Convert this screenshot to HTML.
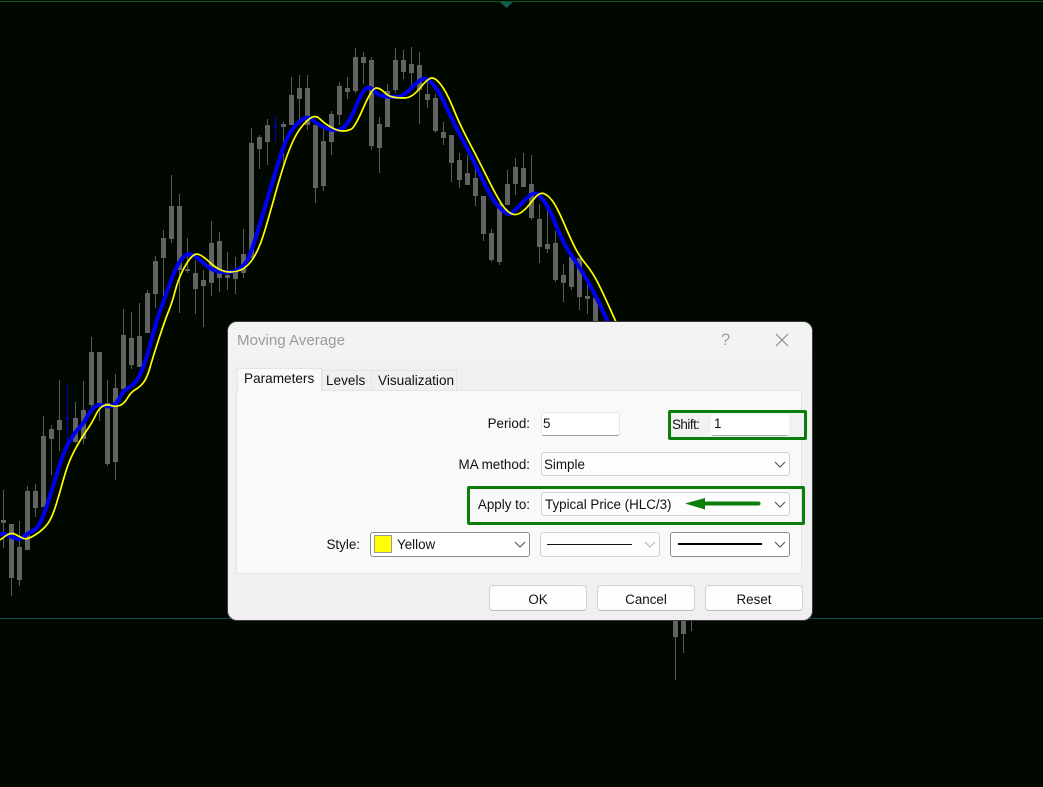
<!DOCTYPE html>
<html><head><meta charset="utf-8"><style>
html,body{margin:0;padding:0;background:#000800;width:1043px;height:787px;overflow:hidden}
body{position:relative;font-family:"Liberation Sans",sans-serif;font-size:13.4px;color:#111}
svg{position:absolute;left:0;top:0}
.a{position:absolute;box-sizing:border-box}
.t{position:absolute;white-space:nowrap;line-height:16px}
.r{text-align:right}
.inp{position:absolute;box-sizing:border-box;background:#fff;border:1px solid #e6e6e6;border-bottom:1px solid #9a9a9a;border-radius:3px}
.sel{position:absolute;box-sizing:border-box;background:#fdfdfd;border:1px solid #d4d4d4;border-radius:3px}
.dk{border:1px solid #8c8c8c;background:#fff}
.btn{position:absolute;box-sizing:border-box;top:585px;height:26px;width:98px;background:#fdfdfd;border:1px solid #d2d2d2;border-bottom-color:#bdbdbd;border-radius:4px;text-align:center;line-height:25px}
</style></head><body>
<svg width="1043" height="787" viewBox="0 0 1043 787">
<rect x="0" y="1" width="1043" height="1" fill="#0c5a10"/>
<polygon points="500,2 513,2 506.5,8" fill="#0f5f50"/>
<rect x="0" y="618" width="1043" height="1" fill="#0b4f50"/>
<path fill="none" stroke="#5a5a5a" stroke-width="1" d="M3.5 490V548M11.5 524V596M19.5 521V586M27.5 486V550M35.5 484V517M43.5 416V507M51.5 425V475M59.5 380V451M75.5 402V443M83.5 381V444M91.5 337V410M99.5 352V421M107.5 380V466M115.5 374V480M123.5 309V389M131.5 312V369M139.5 303V367M147.5 290V333M155.5 256V308M163.5 230V300M171.5 175V243M179.5 194V313M187.5 238V273M195.5 260V314M203.5 270V327M211.5 221V296M219.5 232V292M227.5 252V290M235.5 257V294M243.5 229V278M251.5 128V258M259.5 135V169M267.5 119V165M283.5 122V167M291.5 77V125M299.5 75V125M307.5 75V130M315.5 120V203M323.5 128V191M331.5 111V155M339.5 82V125M347.5 77V99M355.5 48V93M363.5 52V84M371.5 57V150M379.5 117V173M387.5 84V127M395.5 48V93M403.5 50V79M411.5 47V90M419.5 52V124M427.5 80V108M435.5 94V133M443.5 122V145M451.5 135V182M459.5 153V188M467.5 155V185M475.5 165V206M483.5 196V241M491.5 229V262M499.5 203V265M507.5 170V205M515.5 158V195M523.5 153V187M531.5 155V220M539.5 204V263M547.5 208V253M555.5 231V282M563.5 264V302M571.5 252V290M579.5 258V310M587.5 283V314M595.5 298V330M675.5 610V680M683.5 610V653M691.5 610V631"/>
<path fill="none" stroke="#636363" stroke-width="5" d="M3.5 520V523M11.5 524V578M19.5 547V580M27.5 491V550M35.5 491V508M43.5 436V507M51.5 429V439M59.5 420V430M75.5 418V442M83.5 410V439M91.5 352V405M99.5 352V403M107.5 403V464M115.5 388V462M123.5 335V389M131.5 338V365M139.5 336V367M147.5 293V333M155.5 261V294M163.5 238V258M171.5 206V239M179.5 206V270M187.5 269V271M195.5 273V289M203.5 280V286M211.5 243V283M219.5 241V278M227.5 275V278M235.5 270V279M243.5 254V273M251.5 143V258M259.5 137V149M267.5 125V142M283.5 124V127M291.5 95V125M299.5 88V99M307.5 88V125M315.5 125V188M323.5 141V186M331.5 114V142M339.5 86V115M347.5 88V92M355.5 57V91M363.5 57V63M371.5 60V146M379.5 124V148M387.5 91V127M395.5 60V90M403.5 60V72M411.5 64V73M419.5 65V90M427.5 94V100M435.5 98V131M443.5 132V138M451.5 135V163M459.5 160V180M467.5 173V185M475.5 178V196M483.5 196V234M491.5 233V260M499.5 204V262M507.5 184V205M515.5 167V184M523.5 168V187M531.5 184V218M539.5 219V247M547.5 244V249M555.5 243V280M563.5 275V283M571.5 257V287M579.5 258V297M587.5 296V299M595.5 298V330M675.5 610V637M683.5 610V634"/>
<path fill="none" stroke="#0000c8" stroke-width="1" d="M67.5 385V443M65 418.5H70M275.5 115V142M273 126.5H278"/>
<polyline class="sm" fill="none" stroke="#0000f0" stroke-width="4" stroke-linejoin="round" points="0,535 3,533 12,537 20,540 28,533 37,529 43,517 52,490 60,463 68,443 77,430 83,424 92,408 100,404 107,407 116,405 123,391 132,386 139,378 147,357 157,319 163,303 172,277 180,260 188,253 197,257 212,271 230,273 242,268 250,257 267,200 283,147 292,128 307,115 317,124 332,131 347,128 363,89 371,87 378,95 388,97 403,97 420,79 428,78 440,93 453,122 472,157 492,200 507,215 513,213 532,192 540,195 550,210 563,243 580,268 593,290 608,322"/>
<polyline class="sm" fill="none" stroke="#ffff00" stroke-width="1.7" stroke-linejoin="round" points="0,540 11,532 20,537 27,540 43,530 52,518 60,492 68,463 80,440 92,423 99,408 107,404 115,407 124,404 131,392 140,387 147,378 153,357 165,320 172,303 178,280 187,262 195,253 203,256 218,270 233,273 248,267 260,247 270,213 282,170 292,142 302,125 315,114 325,124 338,131 348,131 355,127 372,88 380,88 388,96 397,98 412,98 428,78 436,78 447,93 460,125 477,157 500,203 510,214 518,215 527,208 539,192 548,195 557,207 572,242 580,257 593,273 603,293 616,322"/>
</svg>

<div class="a" style="left:228px;top:322px;width:584px;height:298px;background:#f0f0f0;border-radius:9px;box-shadow:0 0 0 1px #3a3a3a"></div>
<div class="a" style="left:228px;top:322px;width:584px;height:37px;background:#f3f3f3;border-radius:9px 9px 0 0"></div>
<div class="t" style="left:237px;top:332px;font-size:15.1px;line-height:18px;color:#9b9b9b">Moving Average</div>
<div class="t" style="left:721px;top:331px;font-size:16.5px;line-height:18px;color:#9a9a9a">?</div>
<svg style="left:775px;top:333px" width="14" height="14"><path d="M1 1L13 13M13 1L1 13" stroke="#8c8c8c" stroke-width="1.2" fill="none"/></svg>

<div class="a" style="left:236px;top:390px;width:566px;height:184px;background:#f9f9f9;border:1px solid #e4e4e4"></div>
<div class="a" style="left:322px;top:370px;width:50px;height:21px;background:#f0f0f0;border:1px solid #e4e4e4"></div>
<div class="a" style="left:372px;top:370px;width:85px;height:21px;background:#f0f0f0;border:1px solid #e4e4e4;border-left:none"></div>
<div class="a" style="left:237px;top:368px;width:85px;height:24px;background:#f9f9f9;border:1px solid #e4e4e4;border-bottom:none"></div>
<div class="t" style="left:244px;top:371px;font-size:13.6px">Parameters</div>
<div class="t" style="left:326px;top:373px;font-size:13.6px">Levels</div>
<div class="t" style="left:378px;top:373px;font-size:13.6px">Visualization</div>

<div class="t r" style="left:430px;width:100px;top:416px">Period:</div>
<div class="inp" style="left:541px;top:412px;width:79px;height:24px"></div>
<div class="t" style="left:543px;top:416px">5</div>

<div class="a" style="left:670px;top:412px;width:135px;height:26px;background:#f2f2f2"></div>
<div class="inp" style="left:711px;top:414px;width:78px;height:22px;border-color:#fff;border-bottom-color:#a8a8a8"></div>
<div class="t" style="left:672px;top:417px;letter-spacing:-.5px">Shift:</div>
<div class="t" style="left:714px;top:416px">1</div>
<div class="a" style="left:668px;top:410px;width:139px;height:30px;border:3.5px solid #0a7d0a;border-radius:2px"></div>

<div class="t r" style="left:430px;width:100px;top:457px">MA method:</div>
<div class="sel" style="left:541px;top:452px;width:249px;height:24px"></div>
<div class="t" style="left:544px;top:457px">Simple</div>

<div class="t r" style="left:430px;width:100px;top:497px">Apply to:</div>
<div class="sel" style="left:541px;top:492px;width:249px;height:24px"></div>
<div class="t" style="left:545px;top:497px">Typical Price (HLC/3)</div>
<div class="a" style="left:467px;top:486px;width:338px;height:39px;border:3.5px solid #0a7d0a;border-radius:2px"></div>

<div class="t r" style="left:260px;width:100px;top:537px">Style:</div>
<div class="sel dk" style="left:370px;top:532px;width:160px;height:25px"></div>
<div class="a" style="left:374px;top:535px;width:18px;height:18px;background:#ffff00;border:1px solid #9a9a9a"></div>
<div class="t" style="left:397px;top:537px">Yellow</div>
<div class="sel" style="left:540px;top:532px;width:120px;height:25px"></div>
<div class="a" style="left:547px;top:544px;width:85px;height:1px;background:#111"></div>
<div class="sel dk" style="left:670px;top:532px;width:120px;height:25px"></div>
<div class="a" style="left:678px;top:543px;width:84px;height:2px;background:#000"></div>

<svg width="1043" height="787" viewBox="0 0 1043 787">
<path fill="none" stroke="#555" stroke-width="1.1" d="M775 462L780 467L785 462M775 502L780 507L785 502M515 542L520 547L525 542M775 542L780 547L785 542"/>
<path fill="none" stroke="#b5b5b5" stroke-width="1.1" d="M645 542L650 547L655 542"/>
<path d="M703 503.5H758.5" stroke="#0a7d0a" stroke-width="4" stroke-linecap="round" fill="none"/>
<polygon points="685,503.5 705,498 705,509.5" fill="#0a7d0a"/>
</svg>

<div class="btn" style="left:489px;top:585px;padding-top:1px">OK</div>
<div class="btn" style="left:597px;padding-top:1px">Cancel</div>
<div class="btn" style="left:705px;padding-top:1px">Reset</div>
<script>
document.querySelectorAll('polyline.sm').forEach(function(p){
var n=p.getAttribute('points').split(' ').map(function(s){return s.split(',').map(Number)});
var d='M'+n[0][0]+' '+n[0][1]+'L'+(n[0][0]+n[1][0])/2+' '+(n[0][1]+n[1][1])/2;
for(var i=1;i<n.length-1;i++){d+='Q'+n[i][0]+' '+n[i][1]+' '+(n[i][0]+n[i+1][0])/2+' '+(n[i][1]+n[i+1][1])/2}
d+='L'+n[n.length-1][0]+' '+n[n.length-1][1];
var q=document.createElementNS('http://www.w3.org/2000/svg','path');
q.setAttribute('d',d);q.setAttribute('fill','none');q.setAttribute('stroke',p.getAttribute('stroke'));q.setAttribute('stroke-width',p.getAttribute('stroke-width'));
p.parentNode.replaceChild(q,p);
});
</script>
</body></html>
